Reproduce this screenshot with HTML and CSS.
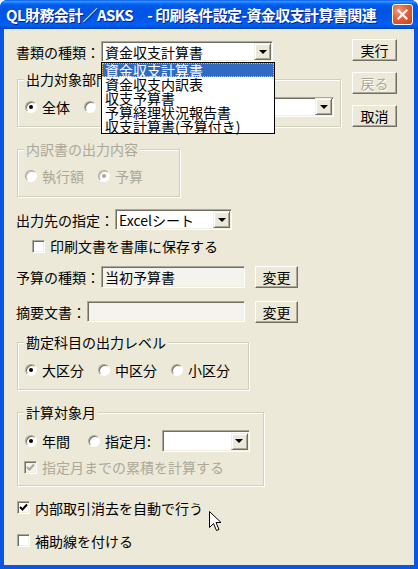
FILE: index.html
```html
<!DOCTYPE html>
<html lang="ja">
<head>
    <meta charset="UTF-8">
    <meta name="viewport" content="width=device-width, initial-scale=1.0">
    <title>印刷条件設定</title>
    <link rel="stylesheet" href="styles.css">
</head>
<body>
    <div class="window">
        <!-- Title bar -->
        <div class="titlebar">
            <span class="title">QL財務会計／ASKS　- 印刷条件設定-資金収支計算書関連</span>
            <span class="close">
                <svg width="11" height="11" viewBox="0 0 11 11"><path d="M1.5 1.5 L9.5 9.5 M9.5 1.5 L1.5 9.5" stroke="#fff" stroke-width="2.2" stroke-linecap="square"/></svg>
            </span>
        </div>

        <div class="client">
            <div class="main">
                <!-- 書類の種類 -->
                <div class="row">
                    <span class="label w85">書類の種類：</span>
                    <div class="select s-kind">
                        <span class="value">資金収支計算書</span>
                        <span class="arrow"></span>
                        <ul class="droplist">
                            <li class="on">資金収支計算書</li>
                            <li>資金収支内訳表</li>
                            <li>収支予算書</li>
                            <li>予算経理状況報告書</li>
                            <li>収支計算書(予算付き)</li>
                        </ul>
                    </div>
                </div>

                <fieldset class="group g-dept">
                    <legend>出力対象部門</legend>
                    <div class="opts">
                        <span class="opt"><span class="radio on"></span>全体</span>
                        <span class="opt"><span class="radio"></span>部門</span>
                        <div class="select s-dept">
                            <span class="value"></span>
                            <span class="arrow"></span>
                        </div>
                    </div>
                </fieldset>

                <fieldset class="group g-detail off">
                    <legend>内訳書の出力内容</legend>
                    <div class="opts">
                        <span class="opt"><span class="radio"></span>執行額</span>
                        <span class="opt"><span class="radio on"></span>予算</span>
                    </div>
                </fieldset>

                <div class="row r-out">
                    <span class="label w99">出力先の指定：</span>
                    <div class="select s-out">
                        <span class="value">Excelシート</span>
                        <span class="arrow"></span>
                    </div>
                </div>

                <div class="cb c-save"><span class="check"></span>印刷文書を書庫に保存する</div>

                <div class="row r-budget">
                    <span class="label w85">予算の種類：</span>
                    <div class="input i-budget">当初予算書</div>
                    <span class="btn small">変更</span>
                </div>

                <div class="row r-summary">
                    <span class="label w71">摘要文書：</span>
                    <div class="input i-summary"></div>
                    <span class="btn small">変更</span>
                </div>

                <fieldset class="group g-level">
                    <legend>勘定科目の出力レベル</legend>
                    <div class="opts">
                        <span class="opt"><span class="radio on"></span>大区分</span>
                        <span class="opt"><span class="radio"></span>中区分</span>
                        <span class="opt"><span class="radio"></span>小区分</span>
                    </div>
                </fieldset>

                <fieldset class="group g-month">
                    <legend>計算対象月</legend>
                    <div class="opts tall">
                        <span class="opt"><span class="radio on"></span>年間</span>
                        <span class="opt month"><span class="radio"></span>指定月:</span>
                        <div class="select s-month">
                            <span class="value"></span>
                            <span class="arrow"></span>
                        </div>
                    </div>
                    <div class="cb c-sum off">
                        <span class="check on dim">
                            <svg width="9" height="9" viewBox="0 0 9 9"><path d="M1 4 L3.5 6.5 L8 1.5" stroke="#ACA899" stroke-width="2" fill="none"/></svg>
                        </span>指定月までの累積を計算する
                    </div>
                </fieldset>

                <div class="cb c-elim">
                    <span class="check on">
                        <svg width="9" height="9" viewBox="0 0 9 9"><path d="M1 4 L3.5 6.5 L8 1.5" stroke="#000" stroke-width="2" fill="none"/></svg>
                    </span>内部取引消去を自動で行う
                </div>
                <div class="cb c-aux"><span class="check"></span>補助線を付ける</div>
            </div>

            <div class="side">
                <span class="btn">実行</span>
                <span class="btn disabled">戻る</span>
                <span class="btn">取消</span>
            </div>
        </div>

        <!-- mouse pointer -->
        <svg class="cursor" width="13" height="21" viewBox="0 0 13 21">
            <path d="M0.5 0.5 L0.5 16.5 L4.5 12.5 L7.5 19.5 L10 18.5 L7 11.5 L12 11.5 Z" fill="#fff" stroke="#000" stroke-width="1"/>
        </svg>
    </div>
</body>
</html>
```

FILE: styles.css
```css
* {
    box-sizing: border-box;
}
body {
    margin: 0;
    background: #fff;
    font-family: "Noto Sans CJK JP", "Noto Sans", sans-serif;
    font-size: 14px;
    line-height: 14px;
    color: #000;
}
.window {
    position: relative;
    width: 418px;
    height: 569px;
    display: flex;
    flex-direction: column;
    padding-bottom: 4px;
    background: #0A56E2;
    border-radius: 7px 7px 0 0;
    overflow: hidden;
}

/* title bar */
.titlebar {
    height: 29px;
    flex: none;
    display: flex;
    align-items: center;
    padding: 0 5px 0 6px;
    background: linear-gradient(to bottom, #0058EE 0%, #3A93FF 5%, #1D7FFC 9%, #0568F4 13%, #0059E8 20%, #0055E3 40%, #0056E8 60%, #005BF2 75%, #0062F2 85%, #0053D8 94%, #0042B2 100%);
}
.title {
    flex: 1;
    color: #fff;
    font-weight: bold;
    font-size: 15px;
    line-height: 20px;
    letter-spacing: -0.6px;
    white-space: nowrap;
    text-shadow: 1px 1px #0A1F8A;
}
.close {
    flex: none;
    width: 21px;
    height: 21px;
    margin-left: 6px;
    display: flex;
    align-items: center;
    justify-content: center;
    border: 1px solid #fff;
    border-radius: 3px;
    background: radial-gradient(circle at 30% 30%, #EE9A7E 0%, #E0603B 45%, #C9401E 100%);
}

/* dialog body */
.client {
    flex: 1;
    margin: 0 4px;
    background: #ECE9D8;
    display: flex;
    padding: 12px 0 0 12px;
}
.main {
    width: 324px;
    display: flex;
    flex-direction: column;
    align-items: flex-start;
}
.side {
    margin-left: 12px;
    margin-top: -2px;
    display: flex;
    flex-direction: column;
    gap: 11px;
}

.row {
    display: flex;
    align-items: center;
    height: 21px;
}
.label {
    white-space: nowrap;
}
.w85 { width: 85px; }
.w99 { width: 99px; }
.w71 { width: 71px; }

/* combo boxes */
.select {
    position: relative;
    display: flex;
    align-items: center;
    height: 21px;
    padding-left: 3px;
    background: #fff;
    border: 1px solid;
    border-color: #ACA899 #fff #fff #ACA899;
    box-shadow: inset 1px 1px #716F64, inset -1px -1px #F1EFE2;
}
.select .value {
    flex: 1;
    white-space: nowrap;
}
.arrow {
    width: 17px;
    height: 17px;
    margin-right: 1px;
    display: flex;
    align-items: center;
    justify-content: center;
    background: #ECE9D8;
    border: 1px solid;
    border-color: #F1EFE2 #716F64 #716F64 #F1EFE2;
    box-shadow: inset 1px 1px #fff, inset -1px -1px #ACA899;
}
.arrow::after {
    content: "";
    border-top: 4px solid #000;
    border-left: 4px solid transparent;
    border-right: 4px solid transparent;
}
.s-kind { width: 172px; }
.s-dept { width: 170px; margin-left: auto; height: 20px; }
.s-out { width: 117px; }
.s-month { width: 88px; height: 22px; margin-left: -3px; }

.droplist {
    position: absolute;
    top: 20px;
    left: -1px;
    width: 174px;
    margin: 0;
    padding: 0;
    list-style: none;
    background: #fff;
    border: 1px solid #000;
    z-index: 5;
}
.droplist li {
    height: 14px;
    line-height: 14px;
    padding-left: 3px;
    white-space: nowrap;
}
.droplist li.on {
    background: #316AC5;
    color: #fff;
    outline: 1px dotted #E8C068;
    outline-offset: -1px;
}

/* group boxes */
.group {
    margin: 0 0 0 1px;
    padding: 10px 6px 9px 7px;
    border: 1px solid #D0D0BF;
    box-shadow: inset 1px 1px #fff, 1px 1px #fff;
}
.group legend {
    height: 14px;
    line-height: 14px;
    padding: 0 2px;
    margin-left: -1px;
    background: #ECE9D8;
}
.g-dept { width: 324px; margin-top: 10px; }
.g-detail { width: 163px; margin-top: 15px; padding-top: 9px; padding-bottom: 10px; }
.g-level { width: 232px; margin-top: 13px; padding-bottom: 9px; }
.g-month { width: 247px; margin-top: 15px; padding-top: 11px; padding-bottom: 11px; }

.off, .off legend {
    color: #ACA899;
}

.opts {
    display: flex;
    align-items: center;
    gap: 14px;
    height: 21px;
}
.opts.tall {
    height: 22px;
}
.opt {
    display: flex;
    align-items: center;
    gap: 5px;
    white-space: nowrap;
}
.month {
    margin-left: 4px;
}
.radio {
    width: 12px;
    height: 12px;
    border-radius: 50%;
    display: flex;
    align-items: center;
    justify-content: center;
    background: #fff;
    border: 1px solid;
    border-color: #ACA899 #fff #fff #ACA899;
    box-shadow: inset 1px 1px #716F64;
}
.radio.on::after {
    content: "";
    width: 4px;
    height: 4px;
    border-radius: 50%;
    background: #000;
}
.off .radio {
    box-shadow: inset 1px 1px #C9C6B6;
}
.off .radio.on::after {
    background: #ACA899;
}

/* check boxes */
.cb {
    display: flex;
    align-items: center;
    gap: 5px;
    height: 14px;
    white-space: nowrap;
}
.check {
    width: 13px;
    height: 13px;
    display: flex;
    align-items: center;
    justify-content: center;
    background: #fff;
    border: 1px solid;
    border-color: #ACA899 #fff #fff #ACA899;
    box-shadow: inset 1px 1px #716F64, inset -1px -1px #F1EFE2;
}
.check.dim {
    background: #F4F3EE;
}
.c-save { margin: 9px 0 0 16px; }
.c-sum { margin: 8px 0 0 -1px; }
.c-elim { margin: 15px 0 0 1px; height: 13px; }
.c-aux { margin: 20px 0 0 1px; height: 13px; }

/* text boxes */
.input {
    height: 22px;
    display: flex;
    align-items: center;
    padding-left: 3px;
    background: #F4F3EE;
    border: 1px solid;
    border-color: #ACA899 #fff #fff #ACA899;
    box-shadow: inset 1px 1px #716F64, inset -1px -1px #F1EFE2;
    white-space: nowrap;
}
.i-budget { width: 144px; }
.i-summary { width: 158px; height: 21px; }
.r-out { margin-top: 12px; }
.r-budget { margin-top: 13px; height: 22px; }
.r-summary { margin-top: 13px; }

/* push buttons */
.btn {
    width: 45px;
    height: 22px;
    display: flex;
    align-items: center;
    justify-content: center;
    background: #ECE9D8;
    border: 1px solid;
    border-color: #fff #716F64 #716F64 #fff;
    box-shadow: inset -1px -1px #ACA899;
    white-space: nowrap;
}
.btn.small {
    width: 43px;
    margin-left: 10px;
}
.btn.disabled {
    color: #ACA899;
    text-shadow: 1px 1px #fff;
}

.cursor {
    position: absolute;
    left: 209px;
    top: 511px;
}
```
